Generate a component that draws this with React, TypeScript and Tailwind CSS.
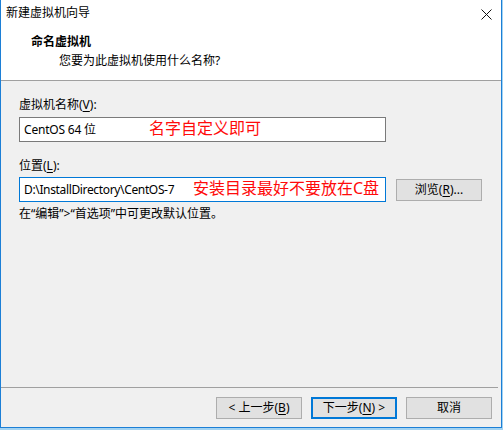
import React from 'react'

const FONT = "font-['Microsoft_YaHei_UI','Noto_Sans','Noto_Sans_CJK_SC',sans-serif]"

function Btn({ children, primary }: { children: React.ReactNode; primary?: boolean }) {
  return (
    <button
      type="button"
      className={
        primary
          ? 'flex h-[22px] w-[86px] items-center justify-center border-2 border-[#0078d7] bg-[#e1e1e1] text-[12px] leading-none text-black'
          : 'flex h-[22px] w-[86px] items-center justify-center border border-[#adadad] bg-[#e1e1e1] text-[12px] leading-none text-black'
      }
    >
      {children}
    </button>
  )
}

export default function App() {
  return (
    <div className={`h-[430px] w-[503px] bg-[#a3d3f2] ${FONT}`}>
      <div className="flex h-[428px] w-[502px] flex-col border-x border-b border-[#1c7fd6] bg-[#f0f0f0] text-[12px] text-black">
        {/* title bar */}
        <div className="flex h-[30px] items-center justify-between bg-white pl-[5px] pr-[9px]">
          <span className="-mt-[4px] leading-[16px]">新建虚拟机向导</span>
          <svg width="11" height="11" viewBox="0 0 11 11" className="-mt-[1px]">
            <path d="M0.5 0.5 L10.5 10.5 M10.5 0.5 L0.5 10.5" stroke="#111" strokeWidth="1" fill="none" />
          </svg>
        </div>

        {/* header */}
        <div className="h-[51px] border-b border-[#a0a0a0] bg-white pl-[30px] pt-[4px]">
          <div className="font-bold leading-[16px]">命名虚拟机</div>
          <div className="mt-[3px] pl-[28px] leading-[16px]">您要为此虚拟机使用什么名称?</div>
        </div>

        {/* body */}
        <div className="px-[18px] pt-[16px]">
          <div className="leading-[16px]">
            虚拟机名称(<u className="underline-offset-2">V</u>):
          </div>
          <div className="relative mt-[4px] flex h-[25px] w-[367px] items-center border border-[#7a7a7a] bg-white pl-[4px]">
            <span className="tracking-[-0.2px]">CentOS 64 位</span>
            <span className="absolute left-[129px] top-[-1px] text-[16px] leading-[22px] text-[#ff0a0a]">名字自定义即可</span>
          </div>

          <div className="mt-[16px] leading-[16px]">
            位置(<u className="underline-offset-2">L</u>):
          </div>
          <div className="mt-[3px] flex items-center gap-[10px]">
            <div className="relative flex h-[25px] w-[367px] items-center border border-[#0078d7] bg-white pl-[4px]">
              <span className="tracking-[-0.35px]">D:\InstallDirectory\CentOS-7</span>
              <span className="absolute left-[173px] top-[-1px] text-[16px] leading-[22px] text-[#ff0a0a]">安装目录最好不要放在C盘</span>
            </div>
            <Btn>
              浏览(<u className="underline-offset-2">R</u>)...
            </Btn>
          </div>

          <div className="mt-[4px] leading-[16px]">在“编辑”&gt;“首选项”中可更改默认位置。</div>
        </div>

        {/* footer */}
        <div className="mt-auto">
          <div className="mr-[3px] h-px bg-[#a0a0a0]" />
          <div className="flex justify-end gap-[9px] pb-[8px] pr-[9px] pt-[9px]">
            <Btn>
              &lt; 上一步(<u className="underline-offset-2">B</u>)
            </Btn>
            <Btn primary>
              下一步(<u className="underline-offset-2">N</u>) &gt;
            </Btn>
            <Btn>取消</Btn>
          </div>
        </div>
      </div>
    </div>
  )
}
